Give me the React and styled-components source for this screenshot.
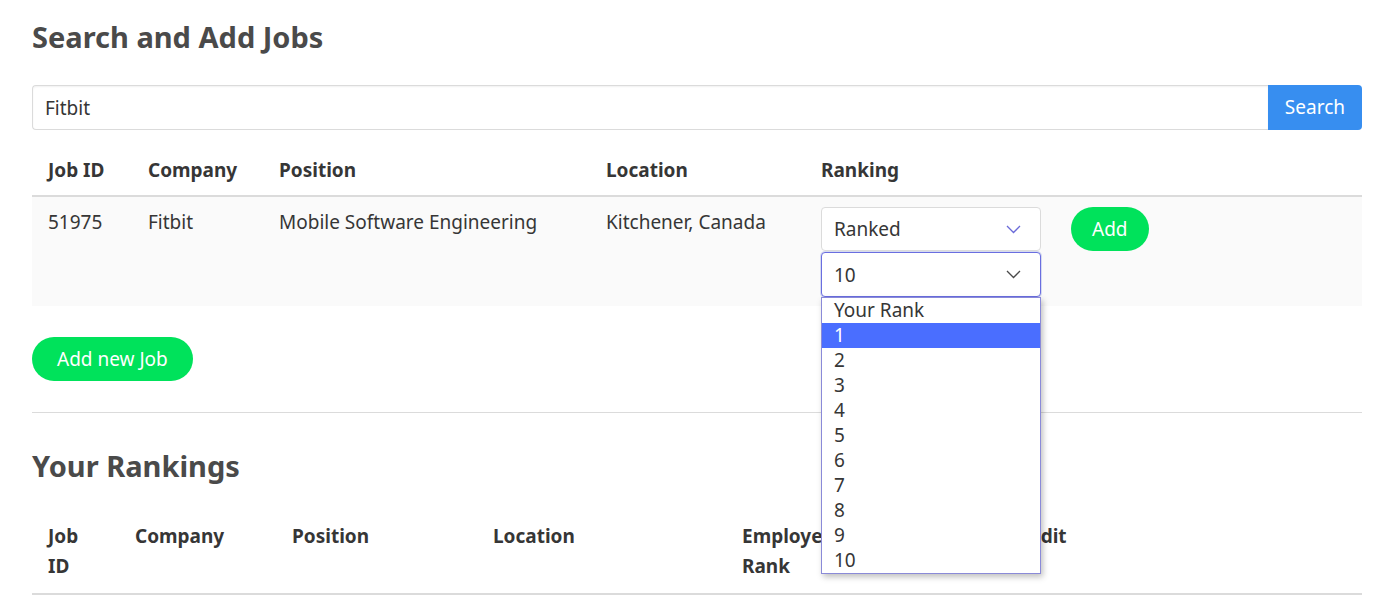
import React from 'react'
import styled, { createGlobalStyle } from 'styled-components'

const Global = createGlobalStyle`
  body {
    margin: 0;
    background: #fff;
    font-family: "Noto Sans", "Open Sans", sans-serif;
    color: #4a4a4a;
  }
  * { box-sizing: border-box; }
`

const Page = styled.div`
  padding: 19px 25px 0 32px;
  width: 1387px;
`

const Title = styled.h2`
  margin: 0 0 30px;
  font-size: 29px;
  line-height: 36px;
  font-weight: 700;
  color: #4a4a4a;
`

const SearchRow = styled.div`
  display: flex;
  height: 45px;
`

const SearchInput = styled.input`
  flex: 1;
  height: 45px;
  border: 1px solid #dbdbdb;
  border-right: none;
  border-radius: 4px 0 0 4px;
  padding: 0 12px;
  font: inherit;
  font-size: 19px;
  color: #363636;
  box-shadow: inset 0 1px 2px rgba(10, 10, 10, 0.06);
  outline: none;
`

const Button = styled.button`
  border: none;
  font-family: inherit;
  font-size: 19px;
  color: #fff;
  height: 44px;
  padding: 0 ${p => p.$pad || 22}px;
  background: #00e25b;
  border-radius: 999px;
  cursor: pointer;
  white-space: nowrap;
`

const SearchButton = styled(Button)`
  height: 45px;
  padding: 0 17px 2px;
  background: #378ef0;
  border-radius: 0 4px 4px 0;
`

const Table = styled.table`
  width: 1330px;
  border-collapse: collapse;
  table-layout: fixed;
  margin-top: ${p => p.$top || 0}px;
  th {
    text-align: left;
    font-size: 19px;
    font-weight: 700;
    line-height: 30px;
    color: #363636;
    padding: 7px 16px ${p => p.$thBottom || 12}px;
    border-bottom: 2px solid #dbdbdb;
    vertical-align: top;
  }
  td {
    font-size: 19px;
    line-height: 30px;
    color: #363636;
    padding: 10px 16px 9px;
    vertical-align: top;
  }
  tbody tr { background: #fafafa; }
`

const Col = styled.col`
  width: ${p => (p.$w ? `${p.$w}px` : 'auto')};
`

const RankCell = styled.div`
  display: flex;
  align-items: flex-start;
  gap: 30px;
`

const Selects = styled.div`
  display: flex;
  flex-direction: column;
  gap: 1px;
  width: 220px;
  position: relative;
`

const SelectBox = styled.div`
  height: ${p => p.$h}px;
  display: flex;
  align-items: center;
  justify-content: space-between;
  padding: 0 19px 0 12px;
  background: #fff;
  border: 1px solid ${p => p.$focus ? '#6a6ee0' : '#dbdbdb'};
  border-radius: 4px;
  font-size: 19px;
  color: #363636;
  box-shadow: ${p => p.$focus ? '0 0 0 1px rgba(72, 95, 199, 0.2)' : 'none'};
`

const Chevron = ({ color }) => (
  <svg width="15" height="9" viewBox="0 0 15 9">
    <path d="M1 1 L7.5 7.5 L14 1" fill="none" stroke={color} strokeWidth="1.3" />
  </svg>
)

const DropList = styled.ul`
  position: absolute;
  top: 90px;
  left: 0;
  width: 220px;
  margin: 0;
  padding: 0;
  list-style: none;
  background: #fff;
  border: 1px solid #8a8ad8;
  box-shadow: 2px 3px 6px rgba(0, 0, 0, 0.25);
  z-index: 5;
`

const Option = styled.li`
  height: 25px;
  line-height: 25px;
  padding-left: 12px;
  font-size: 19px;
  color: ${p => p.$active ? '#fff' : '#363636'};
  background: ${p => p.$active ? '#4a6eff' : 'transparent'};
`

const AddNew = styled.div`
  margin-top: 31px;
`

const Divider = styled.hr`
  margin: 31px 0 35px;
  width: 1330px;
  border: none;
  border-top: 1px solid #dbdbdb;
`

const options = ['Your Rank', '1', '2', '3', '4', '5', '6', '7', '8', '9', '10']

const searchCols = [100, 131, 327, 215, 0]
const rankCols = [87, 157, 201, 249, 166, 122, 0]

export default function App() {
  return (
    <Page>
      <Global />
      <Title>Search and Add Jobs</Title>
      <SearchRow>
        <SearchInput defaultValue="Fitbit" />
        <SearchButton>Search</SearchButton>
      </SearchRow>

      <Table $top={18} $thBottom={10}>
        <colgroup>
          {searchCols.map((w, i) => <Col key={i} $w={w} />)}
        </colgroup>
        <thead>
          <tr>
            <th>Job ID</th>
            <th>Company</th>
            <th>Position</th>
            <th>Location</th>
            <th>Ranking</th>
          </tr>
        </thead>
        <tbody>
          <tr>
            <td>51975</td>
            <td>Fitbit</td>
            <td>Mobile Software Engineering</td>
            <td>Kitchener, Canada</td>
            <td>
              <RankCell>
                <Selects>
                  <SelectBox $h={44}>
                    <span>Ranked</span>
                    <Chevron color="#6a6ad8" />
                  </SelectBox>
                  <SelectBox $h={45} $focus>
                    <span>10</span>
                    <Chevron color="#4a4a4a" />
                  </SelectBox>
                  <DropList>
                    {options.map((o, i) => (
                      <Option key={o} $active={i === 1}>{o}</Option>
                    ))}
                  </DropList>
                </Selects>
                <Button $pad={21}>Add</Button>
              </RankCell>
            </td>
          </tr>
        </tbody>
      </Table>

      <AddNew>
        <Button $pad={25}>Add new Job</Button>
      </AddNew>

      <Divider />

      <Title>Your Rankings</Title>
      <Table>
        <colgroup>
          {rankCols.map((w, i) => <Col key={i} $w={w} />)}
        </colgroup>
        <thead>
          <tr>
            <th>Job ID</th>
            <th>Company</th>
            <th>Position</th>
            <th>Location</th>
            <th>Employee Rank</th>
            <th>Your Rank</th>
            <th>Edit</th>
          </tr>
        </thead>
      </Table>
    </Page>
  )
}
